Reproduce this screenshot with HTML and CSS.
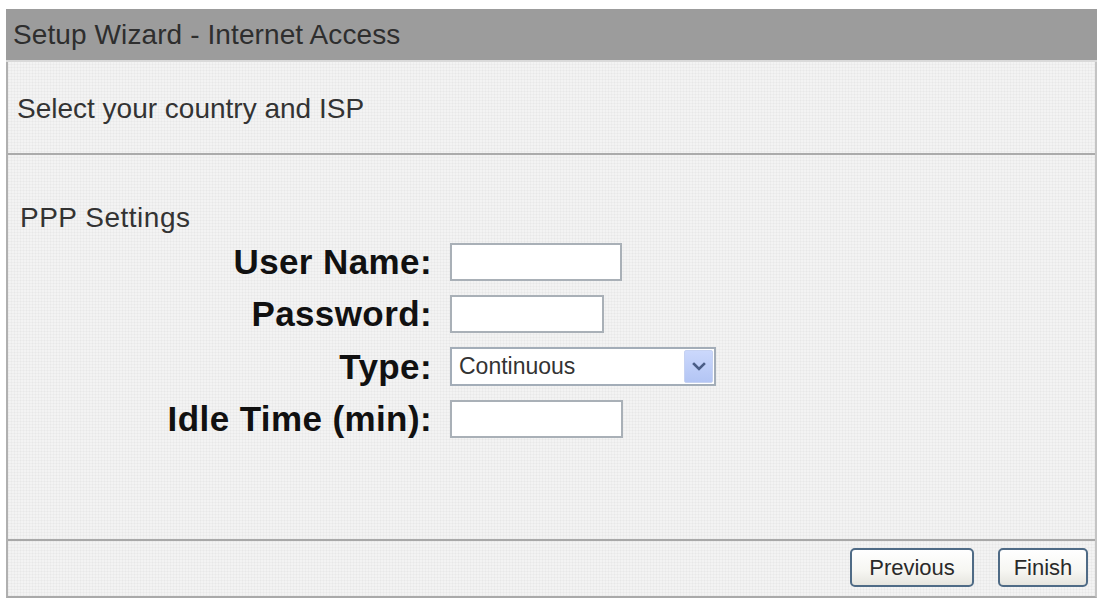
FILE: index.html
```html
<!DOCTYPE html>
<html lang="en">
<head>
<meta charset="utf-8">
<title>Setup Wizard - Internet Access</title>
<link rel="stylesheet" href="styles.css">
</head>
<body>
<div class="wizard">
  <div class="wizard-title">Setup Wizard - Internet Access</div>
  <div class="wizard-panel">
    <div class="step-intro">Select your country and ISP</div>
    <div class="step-body">
      <div class="section-name">PPP Settings</div>
      <div class="form-grid">
        <label class="field-label" for="user">User Name:</label>
        <input class="text-field w-user" id="user" type="text">

        <label class="field-label" for="pass">Password:</label>
        <input class="text-field w-pass" id="pass" type="password">

        <span class="field-label">Type:</span>
        <div class="combo">
          <span class="combo-value">Continuous</span>
          <span class="combo-btn">
            <svg width="14" height="10" viewBox="0 0 14 10"><polyline points="2,2 7,7 12,2" fill="none" stroke="#4a5d86" stroke-width="2.6" stroke-linecap="square"/></svg>
          </span>
        </div>

        <label class="field-label" for="idle">Idle Time (min):</label>
        <input class="text-field w-idle" id="idle" type="text">
      </div>
    </div>
    <div class="step-actions">
      <button class="btn btn-prev" type="button">Previous</button>
      <button class="btn btn-finish" type="button">Finish</button>
    </div>
  </div>
</div>
</body>
</html>
```
FILE: styles.css
```css
html, body {
  margin: 0;
  padding: 0;
  background: #ffffff;
}

body {
  font-family: "Liberation Sans", Arial, sans-serif;
  color: #333333;
}

.wizard {
  margin: 9px 0 0 6px;
  width: 1091px;
}

.wizard-title {
  height: 53px;
  box-sizing: border-box;
  padding: 1px 0 0 7px;
  line-height: 50px;
  font-size: 28px;
  letter-spacing: 0.1px;
  color: #2e2e2e;
  background: #9c9c9c;
  border-bottom: 2px solid #dadada;
}

.wizard-panel {
  border-left: 2px solid #b0b0b0;
  border-right: 2px solid #c4c4c4;
  border-bottom: 2px solid #a9a9a9;
  background-color: #f3f3f3;
  background-image:
    repeating-linear-gradient(90deg, rgba(0,0,0,0.025) 0 1px, transparent 1px 3px),
    repeating-linear-gradient(0deg, rgba(0,0,0,0.025) 0 1px, transparent 1px 3px);
}

.step-intro {
  height: 93px;
  box-sizing: border-box;
  padding: 31px 0 0 9px;
  font-size: 28px;
  line-height: 32px;
  color: #333333;
  border-bottom: 2px solid #ababab;
}

.step-body {
  height: 386px;
  box-sizing: border-box;
  padding: 47px 0 0 12px;
  border-bottom: 2px solid #a8a8a8;
}

.section-name {
  font-size: 28px;
  line-height: 32px;
  letter-spacing: 0.5px;
  color: #333333;
}

.form-grid {
  margin-top: 9px;
  display: grid;
  grid-template-columns: 412px auto;
  column-gap: 18px;
  row-gap: 14px;
  align-items: center;
  justify-items: start;
}

.field-label {
  justify-self: end;
  font-size: 35px;
  font-weight: bold;
  letter-spacing: 0.4px;
  color: #111111;
  line-height: 38px;
}

.text-field {
  box-sizing: border-box;
  height: 38px;
  margin: 0;
  padding: 0 6px;
  border: 2px solid #a9b0b7;
  background: #ffffff;
  font: 22px "Liberation Sans", Arial, sans-serif;
  outline: none;
}

.w-user { width: 172px; }
.w-pass { width: 154px; }
.w-idle { width: 173px; }

.combo {
  box-sizing: border-box;
  width: 266px;
  height: 39px;
  border: 2px solid #a3adb8;
  background: #ffffff;
  display: flex;
  align-items: center;
  justify-content: space-between;
  padding: 1px 1px 1px 7px;
}

.combo-value {
  font-size: 23px;
  color: #333333;
}

.combo-btn {
  width: 29px;
  height: 33px;
  box-sizing: border-box;
  background: linear-gradient(#cbd8fc, #b3c5f4);
  border: 1px solid #c6d2f2;
  border-radius: 2px;
  display: flex;
  align-items: center;
  justify-content: center;
}

.step-actions {
  height: 55px;
  box-sizing: border-box;
  padding: 7px 7px 0 0;
  display: flex;
  justify-content: flex-end;
  gap: 24px;
}

.btn {
  box-sizing: border-box;
  height: 39px;
  margin: 0;
  border: 2px solid #4f6b86;
  border-radius: 5px;
  background: linear-gradient(#ffffff 0%, #f6f6f2 60%, #e6e5df 100%);
  font: 22px "Liberation Sans", Arial, sans-serif;
  color: #2a2a2a;
  cursor: pointer;
}

.btn-prev { width: 124px; }
.btn-finish { width: 90px; }
```
